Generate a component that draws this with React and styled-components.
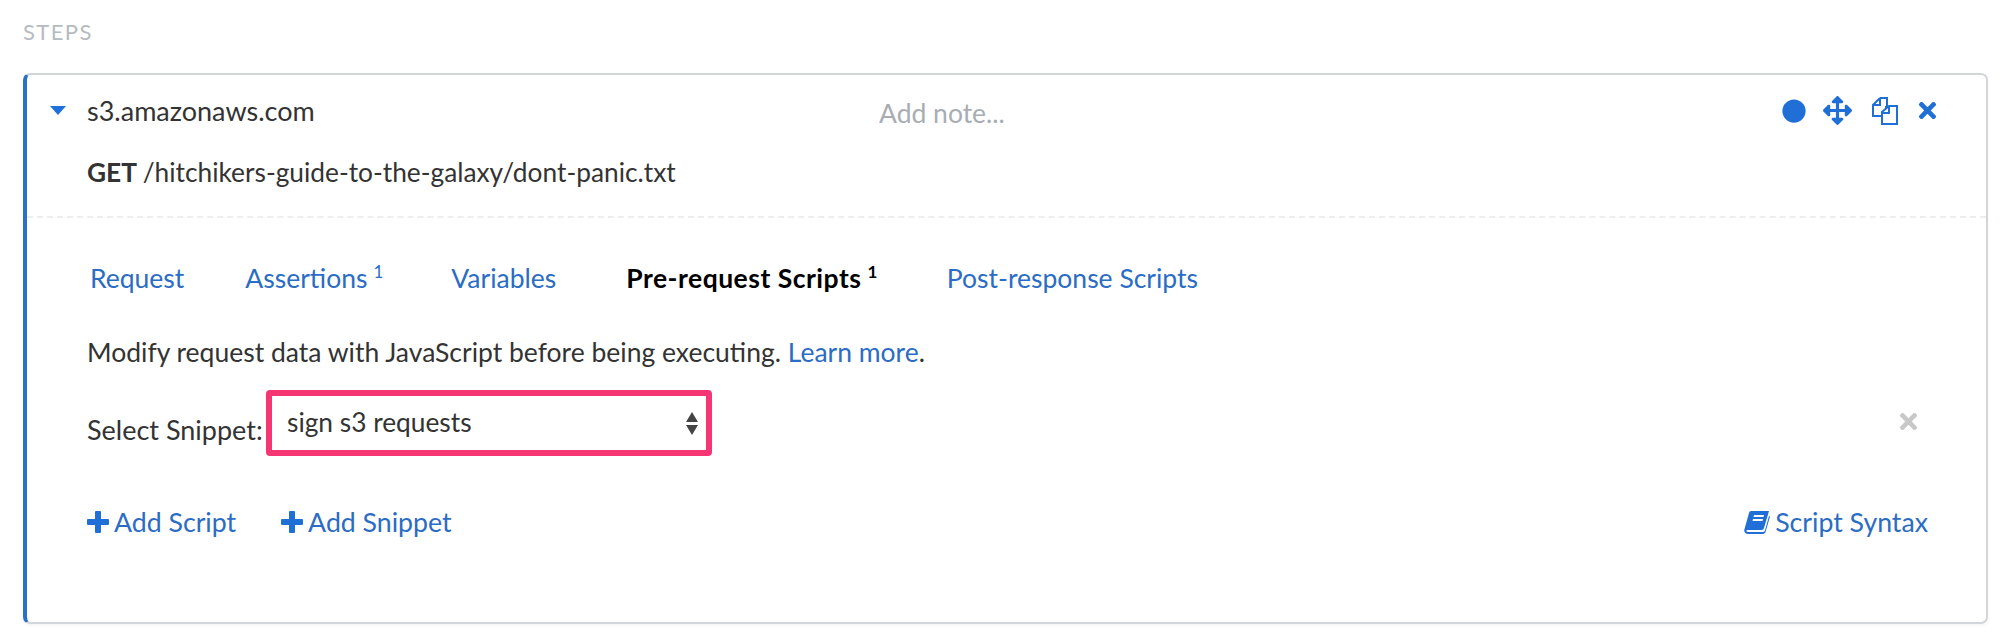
import styled, { createGlobalStyle } from "styled-components";
import { FaCircle, FaArrowsAlt, FaTimes } from "react-icons/fa";

const GlobalStyle = createGlobalStyle`
  body {
    margin: 0;
    background: #fff;
    font-family: "Lato", "Liberation Sans", sans-serif;
    color: #333;
  }
`;

const Page = styled.div`
  width: 2013px;
  height: 643px;
  padding: 19px 25px 0 23px;
  box-sizing: border-box;
  overflow: hidden;
`;

const SectionLabel = styled.div`
  font-size: 22px;
  line-height: 26px;
  letter-spacing: 1.4px;
  color: #b6bbc1;
  height: 28px;
  margin-bottom: 26px;
`;

const Card = styled.div`
  height: 551px;
  box-sizing: border-box;
  border: 2px solid #d2d5d9;
  border-left: 4px solid #2a6fc9;
  border-radius: 7px;
  box-shadow: 0 2px 3px rgba(0, 0, 0, 0.04);
`;

const Header = styled.div`
  display: grid;
  grid-template-columns: 829px 1fr auto;
  align-items: center;
  padding: 17px 46px 0 23px;
  height: 36px;
`;

const HostWrap = styled.div`
  display: flex;
  align-items: center;
  font-size: 27px;
  color: #333;
`;

const Caret = styled.span`
  width: 0;
  height: 0;
  border-left: 8px solid transparent;
  border-right: 8px solid transparent;
  border-top: 9px solid #1f6fdc;
  margin-right: 21px;
`;

const Note = styled.div`
  font-size: 26.5px;
  color: #a8adb3;
  padding-top: 5px;
`;

const Actions = styled.div`
  display: flex;
  align-items: center;
  gap: 16px;
  color: #1f6fd6;
  svg:nth-child(2) {
    margin: 0 3px 0 1px;
  }
`;

const RequestLine = styled.div`
  font-size: 26.3px;
  line-height: 30px;
  padding: 29px 0 0 60px;
  color: #333;
  height: 50px;
  word-spacing: -1px;
  b {
    font-weight: 700;
  }
`;

const Divider = styled.div`
  border-top: 2px dashed #eceef0;
  margin-top: 9px;
`;

const Tabs = styled.div`
  display: flex;
  align-items: center;
  height: 30px;
  margin-top: 45px;
  padding-left: 63px;
`;

const Tab = styled.a`
  font-size: 26.5px;
  color: ${(p) => (p.$active ? "#000" : "#2b6cc4")};
  font-weight: ${(p) => (p.$active ? 700 : 400)};
  letter-spacing: ${(p) => (p.$active ? "0.5px" : 0)};
  margin-right: ${(p) => p.$gap}px;
  white-space: nowrap;
  sup {
    font-size: 17px;
    line-height: 0;
    margin-left: 6px;
  }
`;

const Description = styled.div`
  font-size: 26.5px;
  line-height: 30px;
  margin: 44px 0 0 60px;
  a {
    color: #2b6cc4;
  }
`;

const SnippetRow = styled.div`
  display: flex;
  align-items: center;
  margin-top: 24px;
  padding: 0 65px 0 60px;
  height: 64px;
`;

const SnippetLabel = styled.label`
  font-size: 27px;
  width: 179px;
  padding-top: 12px;
  white-space: nowrap;
`;

const Select = styled.div`
  width: 446px;
  height: 66px;
  box-sizing: border-box;
  border: 6px solid #f53672;
  border-radius: 4px;
  display: flex;
  align-items: center;
  justify-content: space-between;
  padding: 0 8px 2px 15px;
  font-size: 26.3px;
  color: #333;
`;

const SelectArrows = styled.span`
  display: flex;
  flex-direction: column;
  gap: 3px;
  padding-top: 2px;
  i {
    width: 0;
    height: 0;
    border-left: 6px solid transparent;
    border-right: 6px solid transparent;
  }
  i:first-child {
    border-bottom: 10px solid #444;
  }
  i:last-child {
    border-top: 10px solid #444;
  }
`;

const RemoveButton = styled.span`
  margin-left: auto;
  padding-bottom: 4px;
  color: #c8c8c8;
  display: flex;
`;

const Footer = styled.div`
  display: flex;
  align-items: center;
  gap: 45px;
  margin-top: 51px;
  padding: 0 58px 0 60px;
`;

const LinkButton = styled.a`
  display: flex;
  align-items: center;
  gap: 5px;
  font-size: 26.7px;
  color: #2b6cc4;
  margin-left: ${(p) => (p.$right ? "auto" : 0)};
`;

const PlusIcon = () => (
  <svg width="22" height="22" viewBox="0 0 22 22">
    <path
      fill="#1f6fd6"
      d="M9 0h4a1 1 0 0 1 1 1v7h7a1 1 0 0 1 1 1v4a1 1 0 0 1-1 1h-7v7a1 1 0 0 1-1 1H9a1 1 0 0 1-1-1v-7H1a1 1 0 0 1-1-1V9a1 1 0 0 1 1-1h7V1a1 1 0 0 1 1-1z"
    />
  </svg>
);

const CopyIcon = () => (
  <svg width="28" height="28" viewBox="0 0 28 28" fill="none" stroke="#1f6fd6" strokeWidth="2">
    <path d="M9 1h7v9h-2M9 1L2 8v11h9" />
    <path d="M9 1v7H2" />
    <path d="M18 9h8v18H11v-12z" />
    <path d="M18 9v7h-7" />
  </svg>
);

const BookIcon = () => (
  <svg width="26" height="24" viewBox="0 0 26 24">
    <path
      fill="#1f6fd6"
      d="M7 1h18l-5 17c-.4 1.3-1 2-2.500 2H4c-1.200 0-1.800.6-1.500 1.300.2.500.8.700 1.500.700h15c1 0 1.700-.5 2-1.400L25 6l1 .6-4.300 15c-.4 1.500-1.500 2.400-3 2.400H4c-2.500 0-4.200-2-3.700-4.200L5 3c.3-1.200 1-2 2-2z"
    />
    <path fill="#fff" d="M10 5h10l-.5 2h-10zM9 9h10l-.5 2h-10z" />
  </svg>
);

export default function App() {
  return (
    <Page>
      <GlobalStyle />
      <SectionLabel>STEPS</SectionLabel>
      <Card>
        <Header>
          <HostWrap>
            <Caret />
            s3.amazonaws.com
          </HostWrap>
          <Note>Add note...</Note>
          <Actions>
            <FaCircle size={24} />
            <FaArrowsAlt size={29} />
            <CopyIcon />
            <FaTimes size={25} />
          </Actions>
        </Header>
        <RequestLine>
          <b>GET</b> /hitchikers-guide-to-the-galaxy/dont-panic.txt
        </RequestLine>
        <Divider />
        <Tabs>
          <Tab $gap={61}>Request</Tab>
          <Tab $gap={68}>
            Assertions<sup>1</sup>
          </Tab>
          <Tab $gap={70}>Variables</Tab>
          <Tab $active $gap={69}>
            Pre-request Scripts<sup>1</sup>
          </Tab>
          <Tab>Post-response Scripts</Tab>
        </Tabs>
        <Description>
          Modify request data with JavaScript before being executing. <a>Learn more</a>.
        </Description>
        <SnippetRow>
          <SnippetLabel>Select Snippet:</SnippetLabel>
          <Select>
            sign s3 requests
            <SelectArrows>
              <i />
              <i />
            </SelectArrows>
          </Select>
          <RemoveButton>
            <FaTimes size={25} />
          </RemoveButton>
        </SnippetRow>
        <Footer>
          <LinkButton>
            <PlusIcon />
            Add Script
          </LinkButton>
          <LinkButton>
            <PlusIcon />
            Add Snippet
          </LinkButton>
          <LinkButton $right>
            <BookIcon />
            Script Syntax
          </LinkButton>
        </Footer>
      </Card>
    </Page>
  );
}
